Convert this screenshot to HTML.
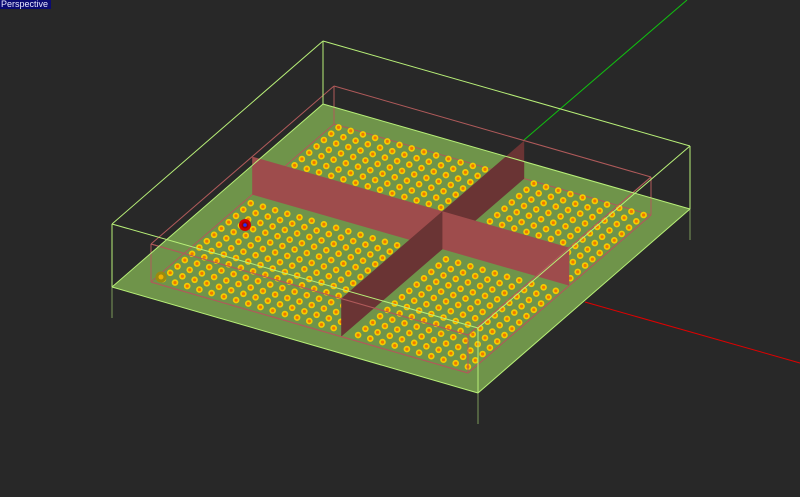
<!DOCTYPE html>
<html><head><meta charset="utf-8"><style>
html,body{margin:0;padding:0;background:#282828;width:800px;height:497px;overflow:hidden}
#lab{position:absolute;left:0;top:0;width:50px;height:9px;background:#0b0b72;color:#e8e8ff;font:9px/9px "Liberation Sans",sans-serif;padding-left:1px}
svg{position:absolute;left:0;top:0}
</style></head><body>
<svg id="s" width="800" height="497" viewBox="0 0 800 497"></svg>
<div id="lab">Perspective</div>
<script>
var s=document.getElementById('s'),h='';
function P(u,v,z){return [151+317*u+183*v,282+91*u-158*v-(z||0)];}
function poly(pts,f){h+='<polygon points="'+pts.map(function(p){return p[0].toFixed(1)+','+p[1].toFixed(1)}).join(' ')+'" fill="'+f+'"/>';}
function line(a,b,c,w){h+='<line x1="'+a[0]+'" y1="'+a[1]+'" x2="'+b[0]+'" y2="'+b[1]+'" stroke="'+c+'" stroke-width="'+(w||1)+'"/>';}
poly([[112,287],[323,104],[690,209],[478,393]],'#6f944a');
line([112,287],[112,318],'#7d9a5a');line([690,209],[690,240],'#7d9a5a');line([478,393],[478,424],'#7d9a5a');
line([524,140],[687,0],'#10c010');line([585,302],[800,363],'#e00000');
var rc='#b05a5a',H=38;
var b=[P(0,0),P(1,0),P(1,1),P(0,1)],t=[P(0,0,H),P(1,0,H),P(1,1,H),P(0,1,H)];
for(var i=0;i<4;i++){line(b[i],b[(i+1)%4],rc);line(t[i],t[(i+1)%4],rc);line(b[i],t[i],rc);}
function dots(u0,u1,v0,v1){
 for(var i=0;i<27;i++)for(var j=0;j<25;j++){var u=0.02+i*0.0385,v=0.03+j*0.04;
  if(u<u0||u>u1||v<v0||v>v1)continue;var p=P(u,v);
  h+='<circle cx="'+p[0].toFixed(1)+'" cy="'+p[1].toFixed(1)+'" r="3.3" fill="#f5cc00"/><circle cx="'+p[0].toFixed(1)+'" cy="'+p[1].toFixed(1)+'" r="1.6" fill="#f07800"/>';}}
var WU=0.6,WV=0.553;
dots(0,WU-0.03,WV+0.03,0.99);
poly([P(WU,WV),P(WU,1),P(WU,1,H),P(WU,WV,H)],'#6a3434');
dots(WU+0.03,0.99,WV+0.03,0.99);
poly([P(0,WV),P(1,WV),P(1,WV,H),P(0,WV,H)],'#9e4c4c');
dots(0,WU-0.03,0,WV-0.03);
poly([P(WU,0),P(WU,WV),P(WU,WV,H),P(WU,0,H)],'#6a3434');
dots(WU+0.03,0.99,0,WV-0.03);
h+='<circle cx="161" cy="277" r="5.5" fill="#9a8a10"/><circle cx="161" cy="277" r="2.5" fill="#f0b000"/>';
h+='<circle cx="245" cy="225" r="6" fill="#d00000"/><circle cx="245" cy="225" r="3.5" fill="#a00000"/><circle cx="245" cy="225" r="1.8" fill="#2030ff"/>';
line(b[0],b[1],rc);line(b[1],b[2],rc);line(t[0],t[1],rc);line(t[1],t[2],rc);line(b[1],t[1],rc);
var g='#b8f078',OB=[[112,287],[323,104],[690,209],[478,393]],OT=[[112,224],[323,41],[690,146],[478,328]];
for(var i=0;i<4;i++){line(OB[i],OB[(i+1)%4],g);line(OT[i],OT[(i+1)%4],g);line(OB[i],OT[i],g);}
s.innerHTML=h;
</script>
</body></html>
